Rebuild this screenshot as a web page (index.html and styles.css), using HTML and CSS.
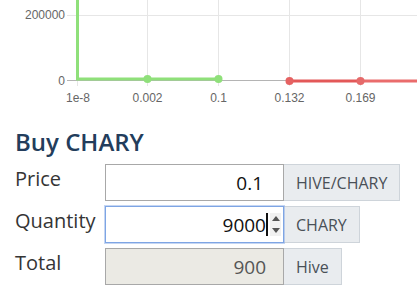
FILE: index.html
```html
<!DOCTYPE html>
<html lang="en">
<head>
<meta charset="utf-8">
<title>Buy CHARY</title>
<link rel="stylesheet" href="styles.css">
</head>
<body>
<div class="chart">
<svg width="417" height="110" viewBox="0 0 417 110">
  <g stroke="#e6e6e6" stroke-width="1">
    <line x1="67" y1="15.5" x2="417" y2="15.5"/>
    <line x1="77.5" y1="0" x2="77.5" y2="86"/>
    <line x1="147.5" y1="0" x2="147.5" y2="86"/>
    <line x1="218.5" y1="0" x2="218.5" y2="86"/>
    <line x1="289.5" y1="0" x2="289.5" y2="86"/>
    <line x1="360.5" y1="0" x2="360.5" y2="86"/>
  </g>
  <line x1="67" y1="80.5" x2="417" y2="80.5" stroke="#b4b4b4" stroke-width="1"/>
  <polyline points="77.5,0 77.5,79 218,79" fill="none" stroke="#8fe07a" stroke-width="3"/>
  <circle cx="147.5" cy="79" r="4" fill="#8fe07a"/>
  <circle cx="218.5" cy="79" r="4" fill="#8fe07a"/>
  <line x1="289" y1="81" x2="360" y2="81" stroke="#e35858" stroke-width="3"/>
  <line x1="360" y1="81" x2="417" y2="81" stroke="#ea6c6c" stroke-width="3"/>
  <circle cx="289.5" cy="81" r="4" fill="#e56262"/>
  <circle cx="360.5" cy="81" r="4" fill="#e56a6a"/>
  <g class="tick" fill="#666">
    <text x="65" y="19" text-anchor="end">200000</text>
    <text x="65" y="85" text-anchor="end">0</text>
    <text x="78" y="102" text-anchor="middle">1e-8</text>
    <text x="147.5" y="102" text-anchor="middle">0.002</text>
    <text x="218.5" y="102" text-anchor="middle">0.1</text>
    <text x="289.5" y="102" text-anchor="middle">0.132</text>
    <text x="360.5" y="102" text-anchor="middle">0.169</text>
  </g>
</svg>
</div>
<div class="order">
  <h2 class="title">Buy CHARY</h2>
  <div class="rows">
    <label class="label" for="price">Price</label>
    <div class="group">
      <input id="price" class="field" type="text" value="0.1">
      <span class="addon">HIVE/CHARY</span>
    </div>
    <label class="label" for="qty">Quantity</label>
    <div class="group">
      <div class="field-wrap">
        <input id="qty" class="field focused" type="text" value="9000">
        <span class="caret"></span>
        <span class="spinner"><span class="up"></span><span class="down"></span></span>
      </div>
      <span class="addon">CHARY</span>
    </div>
    <label class="label" for="total">Total</label>
    <div class="group">
      <input id="total" class="field readonly" type="text" value="900" readonly>
      <span class="addon">Hive</span>
    </div>
  </div>
</div>
</body>
</html>
```
FILE: styles.css
```css
html, body {
  margin: 0;
  padding: 0;
  background: #fff;
  overflow: hidden;
}
body {
  font-family: "Open Sans", "Noto Sans", sans-serif;
}
.chart svg {
  display: block;
}
.tick text {
  font-family: "Liberation Sans", Arial, sans-serif;
  font-size: 12px;
}
.order {
  padding-left: 15px;
}
.title {
  margin: 17px 0 8px;
  font-size: 24px;
  line-height: 29px;
  font-weight: 600;
  color: #233d5c;
}
.rows {
  display: grid;
  grid-template-columns: 90px auto;
  grid-auto-rows: 37px;
  row-gap: 5px;
  justify-content: start;
}
.label {
  font-size: 20px;
  line-height: 30px;
  color: #353535;
}
.group {
  display: flex;
  align-items: stretch;
  height: 37px;
}
.field-wrap {
  position: relative;
  display: flex;
}
.field {
  box-sizing: border-box;
  width: 179px;
  height: 37px;
  margin: 0;
  padding: 0 17px 0 6px;
  border: 1px solid #a8a8a8;
  border-radius: 0;
  background: #fff;
  font-family: "Open Sans", "Noto Sans", sans-serif;
  font-size: 19px;
  color: #111;
  text-align: right;
  outline: none;
}
#price {
  padding-right: 20px;
}
.field.focused {
  border-color: #7ea5e4;
  box-shadow: 0 0 0 1px rgba(126, 165, 228, 0.45);
}
.field.readonly {
  background: #ebeae4;
  color: #555;
}
.caret {
  position: absolute;
  left: 161px;
  top: 7px;
  width: 2px;
  height: 23px;
  background: #111;
}
.spinner {
  position: absolute;
  left: 165px;
  top: 7px;
  width: 11px;
  height: 23px;
  background: #f1f1f1;
  display: flex;
  flex-direction: column;
  align-items: center;
  justify-content: space-around;
}
.spinner .up {
  width: 0;
  height: 0;
  border-left: 4px solid transparent;
  border-right: 4px solid transparent;
  border-bottom: 5px solid #555;
}
.spinner .down {
  width: 0;
  height: 0;
  border-left: 4px solid transparent;
  border-right: 4px solid transparent;
  border-top: 5px solid #555;
}
.addon {
  box-sizing: border-box;
  display: flex;
  align-items: center;
  padding: 0 12px;
  height: 37px;
  border: 1px solid #ced4da;
  border-left: none;
  background: #e9ecef;
  color: #495057;
  font-size: 16px;
  white-space: nowrap;
}
```
